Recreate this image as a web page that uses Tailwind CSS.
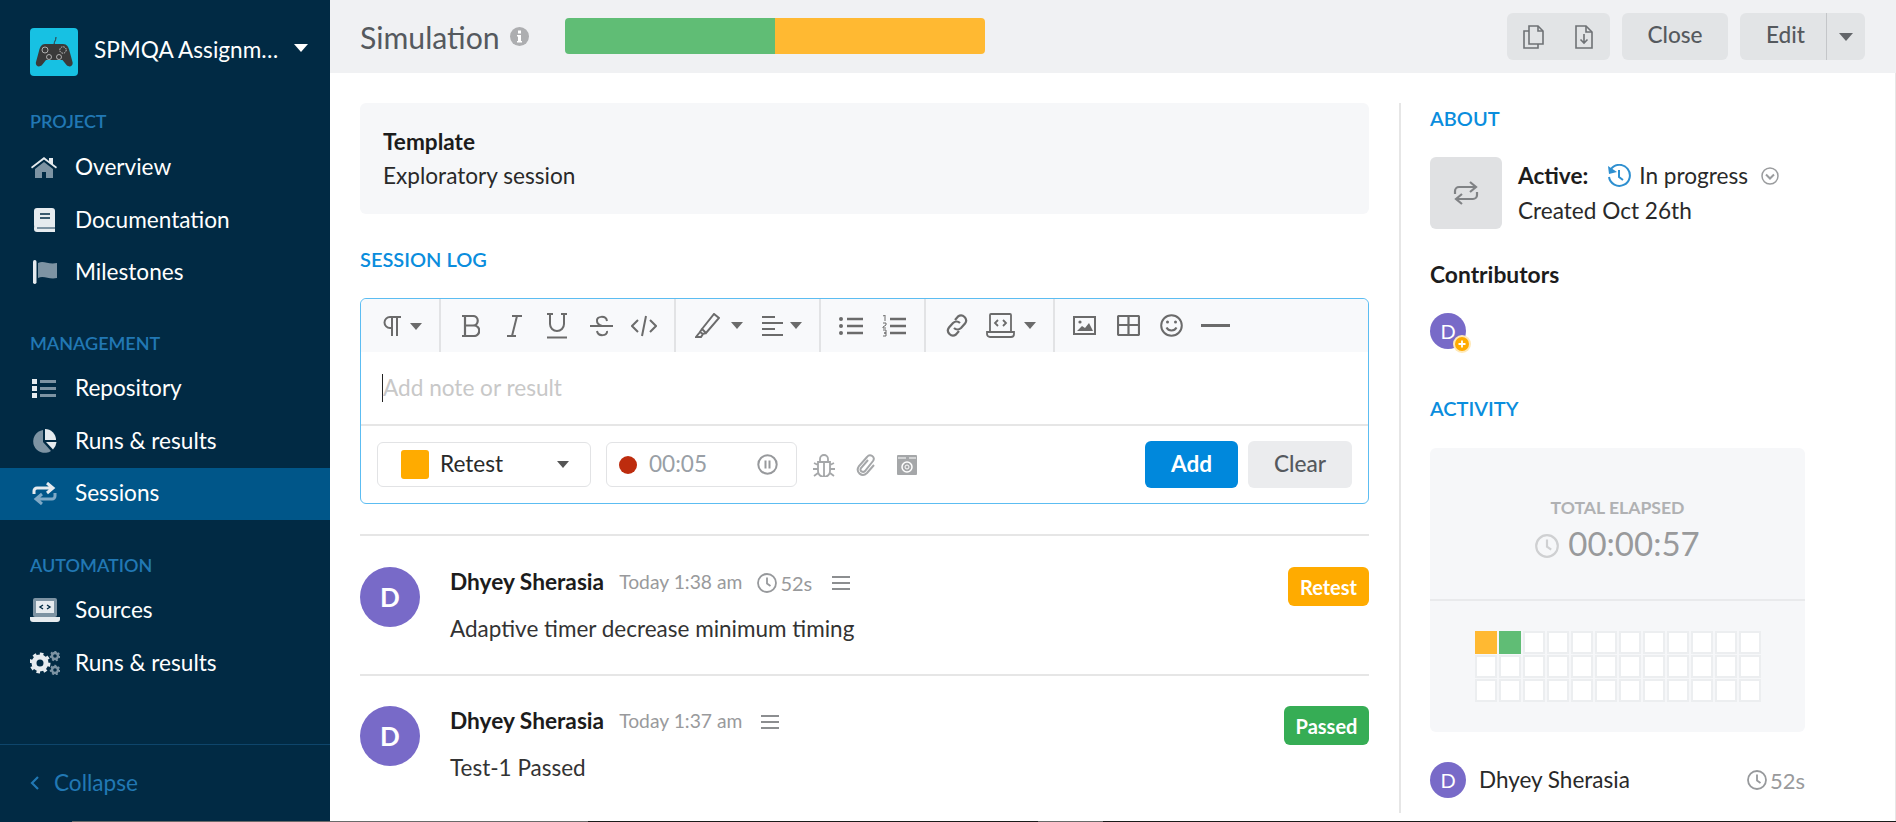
<!DOCTYPE html>
<html><head><meta charset="utf-8">
<script src="https://cdn.jsdelivr.net/npm/@tailwindcss/browser@4"></script>
</head>
<body class="m-0 overflow-hidden bg-white font-['Lato','Noto_Sans',sans-serif] text-[20px] text-[#292929]">
<svg class="hidden"><defs>
<symbol id="caret" viewBox="0 0 14 8"><path d="M0 0h14L7 8z" fill="currentColor"/></symbol>
<symbol id="clock" viewBox="0 0 20 20"><circle cx="10" cy="10" r="9" fill="none" stroke="currentColor" stroke-width="1.800"/><path d="M10 4.500V10.500L13.500 13" fill="none" stroke="currentColor" stroke-width="1.800"/></symbol>
<symbol id="burger" viewBox="0 0 20 16"><path d="M1 2h18M1 8h18M1 14h18" stroke="currentColor" stroke-width="2"/></symbol>
<symbol id="repeat" viewBox="0 0 28 26"><path d="M3 14V11a4 4 0 0 1 4-4H23M18 2l6 5-6 5M25 12v3a4 4 0 0 1-4 4H5M10 14l-6 5 6 5" fill="none" stroke="currentColor" stroke-width="2.200"/></symbol>
</defs></svg>
<div class="flex h-[822px] w-[1896px] flex-col">
<div class="flex h-[821px] min-h-0">
<!-- SIDEBAR -->
<aside class="flex h-full w-[330px] shrink-0 flex-col bg-[#012a44] text-white">
  <div class="flex h-[104px] items-start pl-[30px] pt-[28px]">
    <div class="flex h-[48px] w-[48px] shrink-0 items-center justify-center rounded-[4px] bg-[#17c1e3]">
      <svg width="38" height="30" viewBox="0 0 38 30"><path d="M19 8C19 4 21 4 21 0" fill="none" stroke="#333" stroke-width="1"/><path d="M10 7h18c4 0 5.500 3 6.500 7l3 11c1 4-3 6-6 3l-4-5H11l-4 5c-3 3-7 1-6-3l3-11c1-4 2.500-7 6-7z" fill="#3a3a3a"/><circle cx="10" cy="13" r="3" fill="none" stroke="#ccc" stroke-width=".8"/><circle cx="28" cy="13" r="3.200" fill="none" stroke="#ccc" stroke-dasharray="1.500 1"/><circle cx="14" cy="20" r="2.500" fill="none" stroke="#ccc" stroke-width=".8"/><circle cx="24" cy="20" r="2.500" fill="none" stroke="#ccc" stroke-width=".8"/></svg>
    </div>
    <div class="ml-[16px] mt-[7px] w-[190px] shrink-0 whitespace-nowrap text-[22.6px] leading-[30px]">SPMQA Assignm…</div>
    <svg class="ml-[10px] mt-[16px] shrink-0 text-white" width="14" height="8"><use href="#caret"/></svg>
  </div>
  <div class="mt-[6px] px-[30px] text-[18px] font-semibold leading-[22px] text-[#2178b4]">PROJECT</div>
  <nav class="mt-[10px]">
    <div class="flex h-[52px] items-center px-[30px] pb-[3px] text-[22.6px]"><span class="flex w-[45px] items-center"><svg width="28" height="22" viewBox="0 0 28 22"><path d="M1 11 14 1l5 4V2h4v6l4 3-1 1.500L14 3.500 2 12.500z" fill="#e6ebef"/><path d="M5 13 14 6l9 7v9h-7v-6h-4v6H5z" fill="#7d93a3"/></svg></span>Overview</div>
    <div class="flex h-[53px] items-center px-[30px] pb-[2px] text-[22.6px]"><span class="flex w-[45px] items-center pl-[4px]"><svg width="22" height="24" viewBox="0 0 22 24"><rect x="0" y="0" width="21" height="20" rx="3" fill="#e6ebef"/><path d="M6 6h10M6 10h10" stroke="#012a44" stroke-width="1.600"/><path d="M0 20a3 3 0 0 1 3-3h18v7H3a3 3 0 0 1-3-3z" fill="#e6ebef"/><path d="M3 20h18" stroke="#7d93a3" stroke-width="2"/></svg></span>Documentation</div>
    <div class="flex h-[52px] items-center px-[30px] pb-[3px] text-[22.6px]"><span class="flex w-[45px] items-center pl-[3px]"><svg width="25" height="24" viewBox="0 0 25 24"><rect x="0" y="0" width="3.500" height="24" rx="1.700" fill="#e6ebef"/><path d="M5 3c6-3 10 2 19 0v15c-8 2-13-3-19 0z" fill="#7d93a3"/></svg></span>Milestones</div>
  </nav>
  <div class="mt-[33px] px-[30px] text-[18px] font-semibold leading-[22px] text-[#2178b4]">MANAGEMENT</div>
  <nav class="mt-[9px]">
    <div class="flex h-[52px] items-center px-[30px] pb-[2px] text-[22.6px]"><span class="flex w-[45px] items-center pl-[2px]"><svg width="24" height="19" viewBox="0 0 24 19"><path d="M0 0h5v5H0zM0 7h5v5H0zM0 14h5v5H0z" fill="#e6ebef"/><path d="M8 1h16v3H8zM8 8h16v3H8zM8 15h16v3H8z" fill="#7d93a3"/></svg></span>Repository</div>
    <div class="flex h-[53px] items-center px-[30px] pb-[1px] text-[22.6px]"><span class="flex w-[45px] items-center pl-[1px]"><svg width="26" height="24" viewBox="0 0 26 24"><path d="M12 1v12l8 9A11.500 11.500 0 1 1 12 1z" fill="#7d93a3"/><path d="M14 0a11 11 0 0 1 11 11H14z" fill="#e6ebef"/><path d="M15 13h10.500a12 12 0 0 1-3.500 7.500z" fill="#e6ebef"/></svg></span>Runs &amp; results</div>
    <div class="flex h-[52px] items-center bg-[#005689] px-[30px] pb-[2px] text-[22.6px]"><span class="flex w-[45px] items-center pl-[2px]"><svg width="25" height="23" viewBox="0 0 25 23"><path d="M2 12V9a3 3 0 0 1 3-3H19M15 1l6 5-6 5" fill="none" stroke="#e6ebef" stroke-width="3"/><path d="M23 11v3a3 3 0 0 1-3 3H6M10 12l-6 5 6 5" fill="none" stroke="#7fa9c6" stroke-width="3"/></svg></span>Sessions</div>
  </nav>
  <div class="mt-[34px] px-[30px] text-[18px] font-semibold leading-[22px] text-[#2178b4]">AUTOMATION</div>
  <nav class="mt-[8px]">
    <div class="flex h-[53px] items-center px-[30px] pb-[1px] text-[22.6px]"><span class="flex w-[45px] items-center"><svg width="30" height="24" viewBox="0 0 30 24"><rect x="3" y="0" width="24" height="19" rx="2" fill="#7d93a3"/><rect x="6" y="3" width="18" height="12" fill="#e6ebef"/><path d="M13 7l-3 2 3 2M17 7l3 2-3 2" fill="none" stroke="#012a44" stroke-width="1.400"/><path d="M0 19h30v2a3 3 0 0 1-3 3H3a3 3 0 0 1-3-3z" fill="#e6ebef"/></svg></span>Sources</div>
    <div class="flex h-[52px] items-center px-[30px] text-[22.6px]"><span class="flex w-[45px] items-center"><svg width="30" height="24" viewBox="0 0 30 24"><circle cx="10" cy="12" r="6" fill="none" stroke="#e6ebef" stroke-width="5"/><circle cx="10" cy="12" r="9" fill="none" stroke="#e6ebef" stroke-width="3" stroke-dasharray="3.500 3.500"/><circle cx="25" cy="5" r="3" fill="none" stroke="#7d93a3" stroke-width="2.400"/><circle cx="25" cy="5" r="4.500" fill="none" stroke="#7d93a3" stroke-width="1.600" stroke-dasharray="2 2"/><circle cx="25" cy="19" r="3" fill="none" stroke="#7d93a3" stroke-width="2.400"/><circle cx="25" cy="19" r="4.500" fill="none" stroke="#7d93a3" stroke-width="1.600" stroke-dasharray="2 2"/></svg></span>Runs &amp; results</div>
  </nav>
  <div class="mt-auto flex h-[77px] items-center border-t border-[#0e456b] px-[30px] text-[22.6px] text-[#2178b4]">
    <svg width="10" height="14" viewBox="0 0 10 14"><path d="M8 1 2 7l6 6" fill="none" stroke="currentColor" stroke-width="2.200"/></svg>
    <span class="ml-[14px]">Collapse</span>
  </div>
</aside>
<!-- MAIN -->
<main class="flex min-w-0 flex-1 flex-col border-r border-[#e6e6e6]">
  <header class="-mr-[1px] flex h-[73px] shrink-0 items-center bg-[#f0f1f3] pl-[30px] pr-[31px]">
    <h1 class="text-[30.2px] font-normal leading-[36px] text-[#55595e]">Simulation</h1>
    <svg class="ml-[10px]" width="19" height="19" viewBox="0 0 19 19"><circle cx="9.500" cy="9.500" r="9.500" fill="#adaeb0"/><rect x="8" y="3.500" width="3" height="3" fill="#fff"/><path d="M7 8h4v6h1v1.500H7V14h1V9.500H7z" fill="#fff"/></svg>
    <div class="-mt-[1px] ml-[36px] flex h-[36px] w-[420px] overflow-hidden rounded-[4px]"><div class="w-[210px] bg-[#60bd75]"></div><div class="flex-1 bg-[#ffb932]"></div></div>
    <div class="ml-auto flex h-[47px] w-[103px] items-center rounded-[6px] bg-[#e2e4e6] text-[#6f7276]">
      <svg class="ml-[16px]" width="21" height="24" viewBox="0 0 21 24" fill="none" stroke="currentColor" stroke-width="1.600"><path d="M6 19V1h9l5 5v13z"/><path d="M15 1v5h5"/><path d="M6 6H1v17h14v-4"/></svg>
      <svg class="ml-[31px]" width="18" height="24" viewBox="0 0 18 24" fill="none" stroke="currentColor" stroke-width="1.600"><path d="M1 23V1h10l6 6v16z"/><path d="M11 1v6h6M9 9v9M5.500 14.500 9 18l3.500-3.500"/></svg>
    </div>
    <div class="ml-[12px] flex h-[47px] w-[106px] items-center justify-center rounded-[6px] bg-[#e2e4e6] pb-[3px] text-[22.6px] font-medium text-[#55595e]">Close</div>
    <div class="ml-[12px] flex h-[47px] w-[125px] items-center rounded-[6px] bg-[#e2e4e6] text-[22.6px] font-medium text-[#55595e]"><span class="flex h-full w-[87px] items-center justify-center border-r border-[#c4c6c9] pb-[3px] pl-[5px]">Edit</span><svg class="ml-[12px] text-[#63666a]" width="14" height="8"><use href="#caret"/></svg></div>
  </header>
  <div class="flex min-h-0 flex-1">
    <section class="ml-[30px] w-[1009px] shrink-0 pt-[30px]">
      <div class="h-[111px] rounded-[6px] bg-[#f6f7f9] px-[23px] pt-[22px] text-[22.6px] leading-[34px]">
        <div class="font-bold text-[#1c1c1c]">Template</div><div>Exploratory session</div>
      </div>
      <h2 class="mt-[34px] text-[20px] font-semibold leading-[22px] text-[#0a8ddd]">SESSION LOG</h2>
      <div class="mt-[28px] h-[206px] rounded-[6px] border border-[#5cbdf2]">
        <div class="h-[53px] rounded-t-[6px] bg-[#f8f9fb] text-[#6b6b6b]">
          <div class="flex h-[53px] items-center">
            <span class="flex w-[80px] items-center self-stretch border-r-2 border-[#e2e3e5] pl-[22px]"><svg width="19" height="22" viewBox="0 0 19 22" fill="none" stroke="currentColor" stroke-width="2"><path d="M9 21V2h9M14 2v19"/><path d="M9 2H7a5.500 5.500 0 0 0 0 11h2"/></svg><svg class="ml-[8px] mt-[2px]" width="12" height="7"><use href="#caret"/></svg></span>
            <span class="flex w-[235px] items-center self-stretch border-r-2 border-[#e2e3e5] pl-[21px]"><svg width="18" height="22" viewBox="0 0 18 22" fill="none" stroke="currentColor" stroke-width="2.200"><path d="M0 1h3v20H0M3 1h8a4.500 4.500 0 0 1 0 9.500H3M3 10.500h9a5 5 0 0 1 0 10.500H3"/></svg><svg class="ml-[26px]" width="16" height="22" viewBox="0 0 16 22" fill="none" stroke="currentColor" stroke-width="2"><path d="M6 1h10M1 21h9M11 1 6 21"/></svg><svg class="ml-[24px]" width="22" height="26" viewBox="0 0 22 26" fill="none" stroke="currentColor" stroke-width="2"><path d="M1 1h6M15 1h6M18 1v10a7 7 0 0 1-14 0V1M1 24.500h20"/></svg><svg class="ml-[21.500px]" width="23" height="22" viewBox="0 0 23 22" fill="none" stroke="currentColor" stroke-width="2"><path d="M0 11h23M17 6c-1-6-11-5-10 0 0 2 2 4 5 5M7 16c1 6 11 5 10 0"/></svg><svg class="ml-[18.500px]" width="26" height="22" viewBox="0 0 26 22" fill="none" stroke="currentColor" stroke-width="2"><path d="M7 5 1 11l6 6M19 5l6 6-6 6M15 1l-4 20"/></svg></span>
            <span class="flex w-[145px] items-center self-stretch border-r-2 border-[#e2e3e5] pl-[18.500px]"><svg width="25" height="25" viewBox="0 0 25 25" fill="none" stroke="currentColor" stroke-width="2"><path d="M7 16 19 1l5 4-13 15zM7 16l-2 3 3 2 3-1M5 19l-4 5h5l2-3"/></svg><svg class="ml-[11.500px]" width="12" height="7"><use href="#caret"/></svg><svg class="ml-[18.500px]" width="21" height="20" viewBox="0 0 21 20" fill="none" stroke="currentColor" stroke-width="2"><path d="M0 1h13M0 7h21M0 13h13M0 19h21"/></svg><svg class="ml-[7.500px]" width="12" height="7"><use href="#caret"/></svg></span>
            <span class="flex w-[105px] items-center self-stretch border-r-2 border-[#e2e3e5] pl-[18px]"><svg width="24" height="20" viewBox="0 0 24 20" fill="none" stroke="currentColor"><path d="M8 3h16M8 10h16M8 17h16" stroke-width="2.400"/><circle cx="2" cy="3" r="2" fill="currentColor" stroke="none"/><circle cx="2" cy="10" r="2" fill="currentColor" stroke="none"/><circle cx="2" cy="17" r="2" fill="currentColor" stroke="none"/></svg><svg class="ml-[19px]" width="24" height="22" viewBox="0 0 24 22" fill="none" stroke="currentColor"><path d="M8 4h16M8 11h16M8 18h16" stroke-width="2.400"/><path d="M1 1l2-1v6M1 8h3v2l-3 2v1h3M1 15h3v3H2h2v3H1" stroke-width="1"/></svg></span>
            <span class="flex w-[129px] items-center self-stretch border-r-2 border-[#e2e3e5] pl-[19px]"><svg width="24" height="25" viewBox="0 0 24 25" fill="none" stroke="currentColor" stroke-width="2.200"><path d="M10 7l3-3.500a5 5 0 0 1 7 7L16 15a5 5 0 0 1-7 0"/><path d="M14 18l-3 3.500a5 5 0 0 1-7-7L8 10a5 5 0 0 1 7 0"/></svg><svg class="ml-[16.500px]" width="29" height="25" viewBox="0 0 29 25" fill="none" stroke="currentColor" stroke-width="1.800"><path d="M4 19V2a1 1 0 0 1 1-1h19a1 1 0 0 1 1 1v17M1 19h27v2a3 3 0 0 1-3 3H4a3 3 0 0 1-3-3z"/><path d="M12 7l-3 3 3 3M17 7l3 3-3 3"/></svg><svg class="ml-[9.500px]" width="12" height="7"><use href="#caret"/></svg></span>
            <span class="flex items-center pl-[17.500px]"><svg width="23" height="19" viewBox="0 0 23 19" fill="none" stroke="currentColor" stroke-width="2"><rect x="1" y="1" width="21" height="17"/><path d="M4 15l5-5 3 2 4-5 4 8z" fill="currentColor" stroke="none"/><circle cx="7" cy="6" r="1.600" fill="currentColor" stroke="none"/></svg><svg class="ml-[21px]" width="23" height="21" viewBox="0 0 23 21" fill="none" stroke="currentColor" stroke-width="2.200"><rect x="1" y="1" width="21" height="19" rx="1"/><path d="M11.500 1v19M1 10h21"/></svg><svg class="ml-[20px]" width="23" height="23" viewBox="0 0 23 23" fill="none" stroke="currentColor" stroke-width="2"><circle cx="11.500" cy="11.500" r="10.300"/><path d="M6.500 13.500c2 4 8 4 10 0"/><circle cx="7.500" cy="8" r="1.500" fill="currentColor" stroke="none"/><circle cx="15.500" cy="8" r="1.500" fill="currentColor" stroke="none"/></svg><svg class="ml-[18px]" width="29" height="3"><rect width="29" height="3" fill="currentColor"/></svg></span>
          </div>
        </div>
        <div class="h-[74px] border-b-2 border-[#e6e6e6] pl-[21px] pt-[22px]"><div class="border-l border-[#222] text-[22.6px] leading-[28px] text-[#c8c8c8]">Add note or result</div></div>
        <div class="flex h-[77px] items-center px-[16px]">
          <div class="flex h-[45px] w-[214px] items-center rounded-[6px] border border-[#e2e3e5] pl-[23px]"><span class="h-[29px] w-[28px] rounded-[3px] bg-[#ffab00]"></span><span class="mb-[2px] ml-[11px] text-[22.6px] text-[#292929]">Retest</span><svg class="ml-auto mr-[21px] text-[#555]" width="12" height="7"><use href="#caret"/></svg></div>
          <div class="ml-[15px] flex h-[45px] w-[191px] items-center rounded-[6px] border border-[#e2e3e5] pl-[12px]"><span class="h-[18px] w-[18px] rounded-full bg-[#bd2c0e]"></span><span class="mb-[2px] ml-[12px] text-[22.6px] text-[#999fa6]">00:05</span><svg class="ml-auto mr-[18px] text-[#97999c]" width="21" height="21" viewBox="0 0 21 21"><circle cx="10.500" cy="10.500" r="9.200" fill="none" stroke="currentColor" stroke-width="2"/><path d="M7.500 6.500h2v8h-2zM11.500 6.500h2v8h-2z" fill="currentColor"/></svg></div>
          <div class="ml-[16px] flex items-center text-[#a5a7a9]">
            <svg width="22" height="24" viewBox="0 0 22 24" fill="none" stroke="currentColor" stroke-width="1.800"><path d="M5 9h12v9a6 6 0 0 1-12 0zM7 9V6a4 4 0 0 1 8 0v3M11 9v15M1 10l4 2M21 10l-4 2M0 16h5M22 16h-5M1 23l4-3M21 23l-4-3"/></svg>
            <svg class="ml-[21px]" width="20" height="24" viewBox="0 0 20 24" fill="none" stroke="currentColor" stroke-width="2"><path d="M12 7 5 15c-2 3 2 5 4 3l8-10c3-4-3-8-6-4L3 13c-4 6 3 12 8 7l7-8"/></svg>
            <svg class="ml-[21px]" width="20" height="20" viewBox="0 0 20 20"><path d="M1 0h18a1 1 0 0 1 1 1v18a1 1 0 0 1-1 1H1a1 1 0 0 1-1-1V1a1 1 0 0 1 1-1z" fill="currentColor"/><path d="M1 3h8M12 3h7" stroke="#fff" stroke-width="1"/><circle cx="10" cy="12" r="5" fill="none" stroke="#fff" stroke-width="1.500"/><circle cx="10" cy="12" r="2" fill="none" stroke="#fff"/></svg>
          </div>
          <div class="ml-auto flex h-[47px] w-[93px] items-center justify-center rounded-[6px] bg-[#0088dc] pb-[2px] text-[22.6px] font-bold text-white">Add</div>
          <div class="ml-[10px] flex h-[47px] w-[104px] items-center justify-center rounded-[6px] bg-[#ebecee] pb-[2px] text-[22.6px] font-medium text-[#55595e]">Clear</div>
        </div>
      </div>
      <div class="mt-[30px] h-[140px] border-t-2 border-[#e6e6e6] pt-[31px]">
        <div class="flex">
          <div class="flex h-[60px] w-[60px] shrink-0 items-center justify-center rounded-full bg-[#786ac8] text-[26px] font-bold text-white">D</div>
          <div class="ml-[30px]">
            <div class="flex h-[32px] items-center pb-[1px]"><span class="text-[22.7px] font-bold text-[#1c1c1c]">Dhyey Sherasia</span><span class="ml-[15px] text-[19.3px] text-[#999a9c]">Today 1:38 am</span><svg class="ml-[15px] text-[#97999c]" width="20" height="20"><use href="#clock"/></svg><span class="ml-[3px] text-[20px] text-[#999a9c]">52s</span><svg class="ml-[19px] text-[#8c8e90]" width="20" height="16"><use href="#burger"/></svg></div>
            <div class="mt-[14px] text-[22.5px] leading-[32px] text-[#333]">Adaptive timer decrease minimum timing</div>
          </div>
          <div class="ml-auto flex h-[39px] w-[81px] items-center justify-center rounded-[6px] bg-[#ffab00] text-[20px] font-bold text-white">Retest</div>
        </div>
      </div>
      <div class="border-t-2 border-[#e6e6e6] pt-[30px]">
        <div class="flex">
          <div class="flex h-[60px] w-[60px] shrink-0 items-center justify-center rounded-full bg-[#786ac8] text-[26px] font-bold text-white">D</div>
          <div class="ml-[30px]">
            <div class="flex h-[32px] items-center pb-[1px]"><span class="text-[22.7px] font-bold text-[#1c1c1c]">Dhyey Sherasia</span><span class="ml-[15px] text-[19.3px] text-[#999a9c]">Today 1:37 am</span><svg class="ml-[18px] text-[#8c8e90]" width="20" height="16"><use href="#burger"/></svg></div>
            <div class="mt-[14px] text-[22.5px] leading-[32px] text-[#333]">Test-1 Passed</div>
          </div>
          <div class="ml-auto flex h-[39px] w-[85px] items-center justify-center rounded-[6px] bg-[#36ad55] text-[20px] font-bold text-white">Passed</div>
        </div>
      </div>
    </section>
    <div class="mb-[8px] ml-[30px] mt-[30px] w-[2px] bg-[#e6e6e6]"></div>
    <section class="ml-[29px] w-[375px] shrink-0 pt-[33px]">
      <h2 class="text-[20px] font-semibold leading-[24px] text-[#0a8ddd]">ABOUT</h2>
      <div class="mt-[27px] flex h-[72px]">
        <div class="flex h-[72px] w-[72px] items-center justify-center rounded-[6px] bg-[#e0e1e3] text-[#808285]"><svg width="28" height="26"><use href="#repeat"/></svg></div>
        <div class="ml-[16px] mt-[1px] text-[22.6px] leading-[35px]">
          <div class="flex items-center"><span class="font-bold text-[#1c1c1c]">Active:</span><svg class="ml-[19px]" width="24" height="24" viewBox="0 0 24 24" fill="none" stroke="#2e8fd0" stroke-width="2"><path d="M4 5a10.500 10.500 0 1 1-2 8"/><path d="M1 2l1 8 8-2z" fill="#2e8fd0" stroke="none"/><path d="M12 6v7l4 3"/></svg><span class="ml-[8px]">In progress</span><svg class="ml-[13px]" width="18" height="18" viewBox="0 0 18 18" fill="none" stroke="#9a9c9e" stroke-width="1.500"><circle cx="9" cy="9" r="8"/><path d="M5 7.500 9 11.500l4-4" stroke-width="2"/></svg></div>
          <div>Created Oct 26th</div>
        </div>
      </div>
      <div class="mt-[30px] text-[22.8px] font-bold leading-[30px] text-[#1c1c1c]">Contributors</div>
      <div class="relative mt-[24px] h-[36px] w-[36px]">
        <div class="flex h-[36px] w-[36px] items-center justify-center rounded-full bg-[#786ac8] text-[20px] text-white">D</div>
        <div class="absolute left-[23px] top-[22px] flex h-[18px] w-[18px] items-center justify-center rounded-full bg-[#ffe9b8]"><svg width="14" height="14" viewBox="0 0 14 14"><circle cx="7" cy="7" r="7" fill="#ffab00"/><path d="M7 3.500v7M3.500 7h7" stroke="#fff" stroke-width="1.800"/></svg></div>
      </div>
      <h2 class="mt-[47px] text-[20px] font-semibold leading-[24px] text-[#0a8ddd]">ACTIVITY</h2>
      <div class="mt-[28px] h-[284px] w-[375px] rounded-[6px] bg-[#f6f7f9]">
        <div class="h-[153px] border-b-2 border-[#e9eaec] pt-[50px] text-center">
          <div class="text-[17.6px] font-bold leading-[20px] text-[#b0b1b3]">TOTAL ELAPSED</div>
          <div class="mt-[3px] flex items-center justify-center text-[33px] leading-[44px] text-[#999a9c]"><svg class="mr-[9px] mt-[6px] text-[#cfd0d2]" width="24" height="24"><use href="#clock"/></svg>00:00:57</div>
        </div>
        <div class="grid auto-rows-[23px] grid-cols-[repeat(12,22px)] gap-x-[2px] gap-y-[1px] pl-[45px] pt-[30px]">
          <div class="bg-[#ffb932]"></div><div class="bg-[#60bd75]"></div>
          <div class="border-2 border-[#eceef0] bg-white"></div><div class="border-2 border-[#eceef0] bg-white"></div><div class="border-2 border-[#eceef0] bg-white"></div><div class="border-2 border-[#eceef0] bg-white"></div><div class="border-2 border-[#eceef0] bg-white"></div><div class="border-2 border-[#eceef0] bg-white"></div><div class="border-2 border-[#eceef0] bg-white"></div><div class="border-2 border-[#eceef0] bg-white"></div><div class="border-2 border-[#eceef0] bg-white"></div><div class="border-2 border-[#eceef0] bg-white"></div>
          <div class="border-2 border-[#eceef0] bg-white"></div><div class="border-2 border-[#eceef0] bg-white"></div><div class="border-2 border-[#eceef0] bg-white"></div><div class="border-2 border-[#eceef0] bg-white"></div><div class="border-2 border-[#eceef0] bg-white"></div><div class="border-2 border-[#eceef0] bg-white"></div><div class="border-2 border-[#eceef0] bg-white"></div><div class="border-2 border-[#eceef0] bg-white"></div><div class="border-2 border-[#eceef0] bg-white"></div><div class="border-2 border-[#eceef0] bg-white"></div><div class="border-2 border-[#eceef0] bg-white"></div><div class="border-2 border-[#eceef0] bg-white"></div>
          <div class="border-2 border-[#eceef0] bg-white"></div><div class="border-2 border-[#eceef0] bg-white"></div><div class="border-2 border-[#eceef0] bg-white"></div><div class="border-2 border-[#eceef0] bg-white"></div><div class="border-2 border-[#eceef0] bg-white"></div><div class="border-2 border-[#eceef0] bg-white"></div><div class="border-2 border-[#eceef0] bg-white"></div><div class="border-2 border-[#eceef0] bg-white"></div><div class="border-2 border-[#eceef0] bg-white"></div><div class="border-2 border-[#eceef0] bg-white"></div><div class="border-2 border-[#eceef0] bg-white"></div><div class="border-2 border-[#eceef0] bg-white"></div>
        </div>
      </div>
      <div class="mt-[30px] flex h-[36px] w-[375px] items-center">
        <div class="flex h-[36px] w-[36px] items-center justify-center rounded-full bg-[#786ac8] text-[20px] text-white">D</div>
        <span class="ml-[13px] text-[22.5px]">Dhyey Sherasia</span>
        <svg class="ml-auto text-[#97999c]" width="20" height="20"><use href="#clock"/></svg>
        <span class="ml-[3px] text-[22px] text-[#999a9c]">52s</span>
      </div>
    </section>
  </div>
</main>
</div>
<div class="flex h-[1px] bg-[#1a1a1a]"><div class="w-[72px] bg-[#012a44]"></div><div class="w-[516px] bg-[#6a6a6a]"></div><div class="w-[450px]"></div><div class="w-[65px] bg-[#6a6a6a]"></div></div>
</div>
</body></html>
